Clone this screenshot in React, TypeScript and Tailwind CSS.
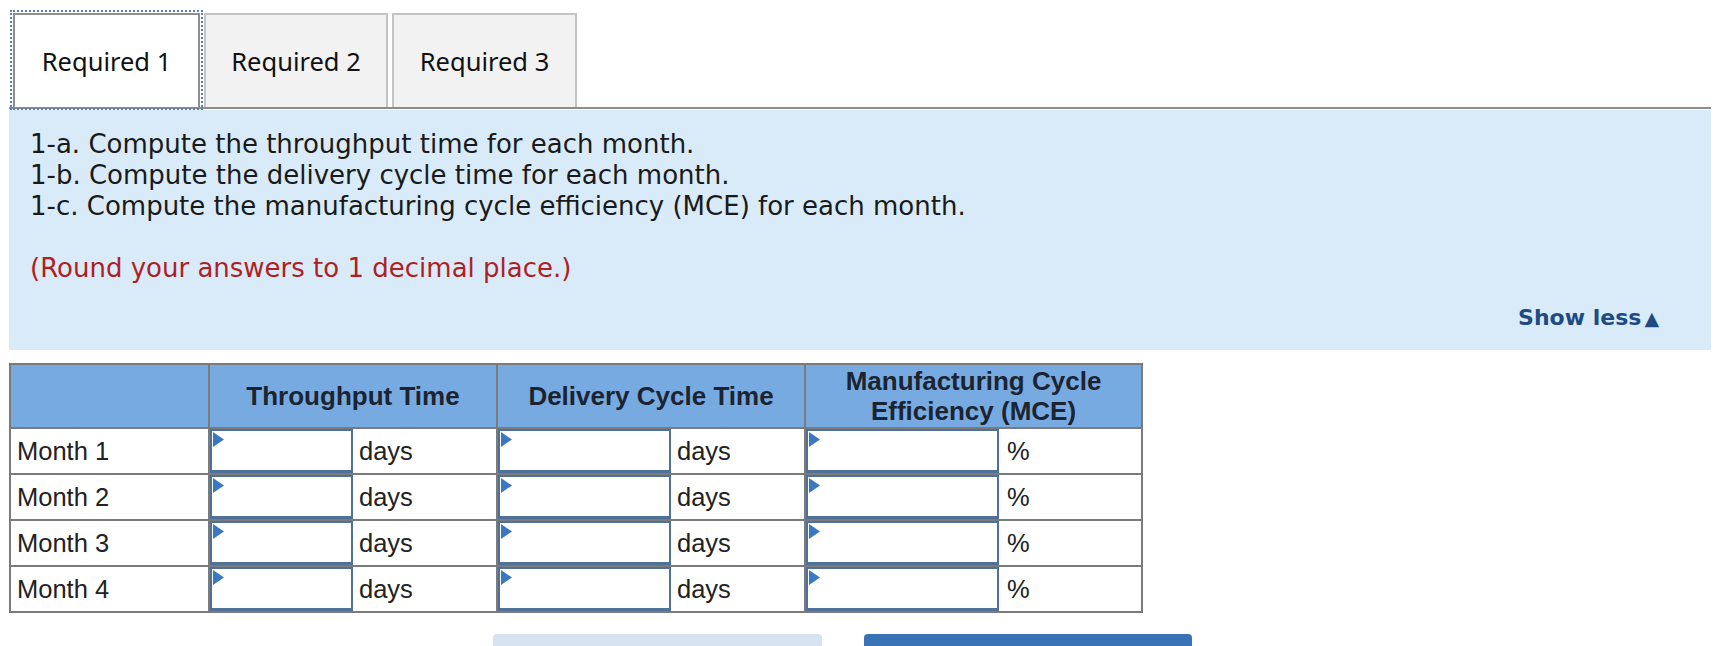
import React from "react";

const Tri = () => (
  <svg className="absolute left-[1px] top-[1px]" width="11" height="16" viewBox="0 0 11 16">
    <polygon points="0,0 11,7.5 0,15" fill="#3b78c2" />
  </svg>
);

const InputBox = () => (
  <div className="relative h-full border-2 border-[#4f7098] bg-white border-b-[3px]">
    <Tri />
  </div>
);

const months = ["Month 1", "Month 2", "Month 3", "Month 4"];

export default function App() {
  return (
    <div className="w-[1723px] min-h-[646px] bg-white pt-[13px] pl-[9px] pr-[12px] overflow-hidden">
      {/* Tabs */}
      <div className="flex items-end gap-[4px] pl-[4px] border-b-2 border-[#8c8c8c]" style={{ fontFamily: '"Noto Sans", "Open Sans", sans-serif' }}>
        <div className="w-[187px] h-[94px] flex items-center justify-center bg-white border-2 border-b-0 border-[#8f8f8f] outline-2 outline-dotted outline-[#5b7fae] outline-offset-[1px] text-[25.5px] text-[#111]">
          Required 1
        </div>
        <div className="w-[184px] h-[94px] flex items-center justify-center bg-[#f2f2f2] border-2 border-b-0 border-[#c4c4c4] text-[25.5px] text-[#111]">
          Required 2
        </div>
        <div className="w-[185px] h-[94px] flex items-center justify-center bg-[#f2f2f2] border-2 border-b-0 border-[#c4c4c4] text-[25.5px] text-[#111]">
          Required 3
        </div>
      </div>

      {/* Instruction panel */}
      <div className="mt-px bg-[#d9ebf8] pl-[21px] pr-[52px] pt-[19px] pb-[20px]" style={{ fontFamily: '"DejaVu Sans", Verdana, sans-serif' }}>
        <div className="text-[26px] leading-[31px] text-[#1a1a1a]">
          <div>1-a. Compute the throughput time for each month.</div>
          <div>1-b. Compute the delivery cycle time for each month.</div>
          <div>1-c. Compute the manufacturing cycle efficiency (MCE) for each month.</div>
          <div className="mt-[31px] text-[#b01e24]">(Round your answers to 1 decimal place.)</div>
        </div>
        <div className="mt-[22px] flex justify-end items-center leading-[24px] text-[22px] font-bold text-[#1d4b82]">
          <span>Show less</span>
          <span className="ml-[3px] text-[19px]">▲</span>
        </div>
      </div>

      {/* Table */}
      <div
        className="mt-[13px] w-[1134px] border-l-2 border-t-2 border-[#7b7b7b] grid grid-cols-[199px_143px_145px_173px_135px_193px_144px] text-[25.5px] text-[#222]"
        style={{ fontFamily: '"Liberation Sans", Arial, sans-serif' }}
      >
        <div className="h-[64px] bg-[#78aae2] border-r-2 border-b-2 border-[#7b7b7b]" />
        <div className="col-span-2 h-[64px] bg-[#78aae2] border-r-2 border-b-2 border-[#7b7b7b] flex items-center justify-center font-bold text-[26px] text-[#1b2430]">
          Throughput Time
        </div>
        <div className="col-span-2 h-[64px] bg-[#78aae2] border-r-2 border-b-2 border-[#7b7b7b] flex items-center justify-center font-bold text-[26px] text-[#1b2430]">
          Delivery Cycle Time
        </div>
        <div className="col-span-2 h-[64px] bg-[#78aae2] border-r-2 border-b-2 border-[#7b7b7b] flex flex-col items-center justify-center font-bold text-[26px] text-[#1b2430] leading-[30px] text-center">
          <span>Manufacturing Cycle</span>
          <span>Efficiency (MCE)</span>
        </div>

        {months.map((m) => (
          <React.Fragment key={m}>
            <div className="h-[46px] border-r-2 border-b-2 border-[#7b7b7b] flex items-center pl-[6px]">{m}</div>
            <div className="h-[46px] border-b-2 border-[#7b7b7b]"><InputBox /></div>
            <div className="h-[46px] border-r-2 border-b-2 border-[#7b7b7b] flex items-center pl-[6px]">days</div>
            <div className="h-[46px] border-b-2 border-[#7b7b7b]"><InputBox /></div>
            <div className="h-[46px] border-r-2 border-b-2 border-[#7b7b7b] flex items-center pl-[6px]">days</div>
            <div className="h-[46px] border-b-2 border-[#7b7b7b]"><InputBox /></div>
            <div className="h-[46px] border-r-2 border-b-2 border-[#7b7b7b] flex items-center pl-[8px]">%</div>
          </React.Fragment>
        ))}
      </div>

      {/* Buttons */}
      <div className="mt-[21px] flex gap-[42px] pl-[484px]">
        <div className="w-[329px] h-[20px] rounded-t-[4px] bg-[#d6e3f1]" />
        <div className="w-[328px] h-[20px] rounded-t-[4px] bg-[#3a72b6]" />
      </div>
    </div>
  );
}
